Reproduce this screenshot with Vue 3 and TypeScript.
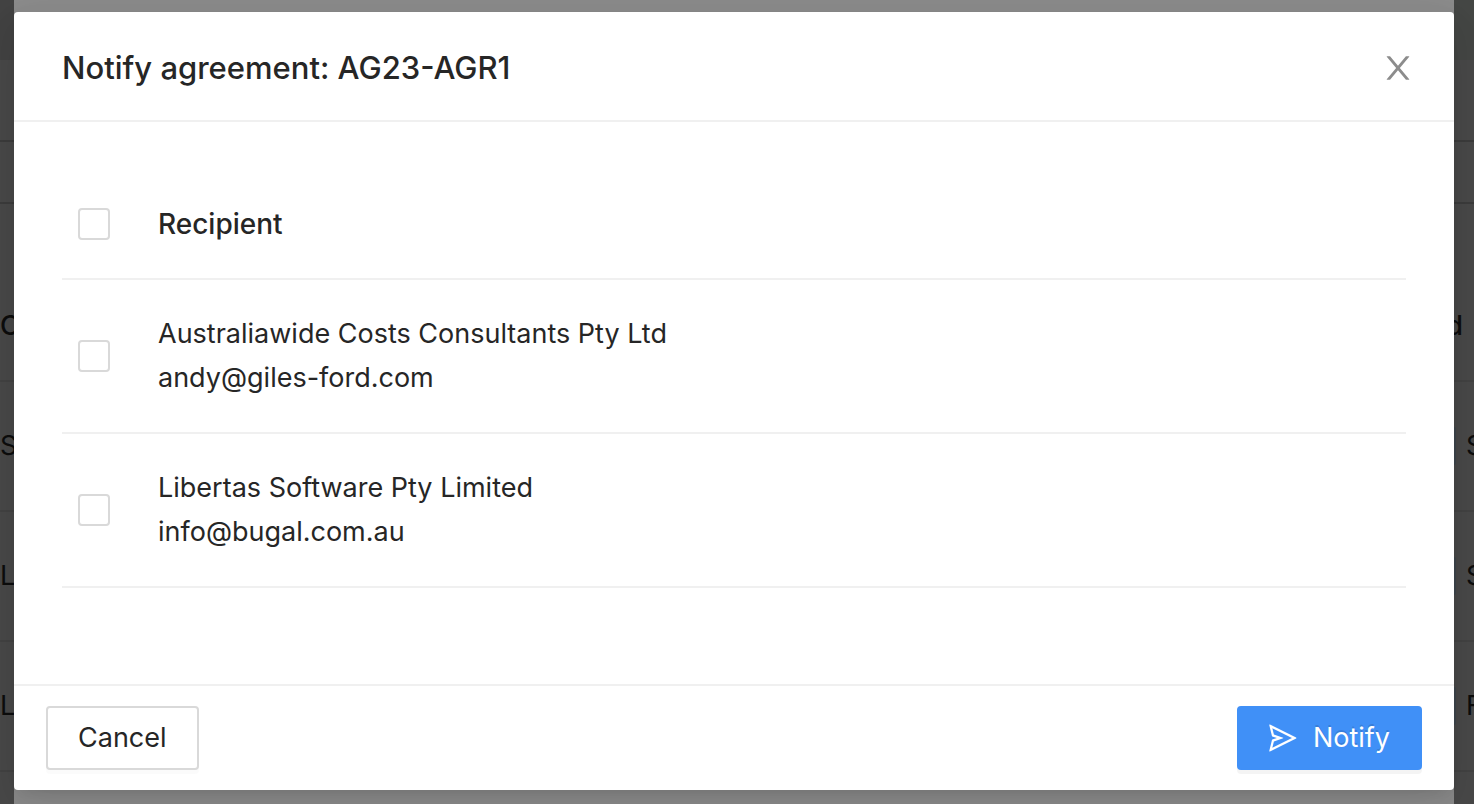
<script setup lang="ts">
import { computed, ref } from 'vue'

interface Recipient {
  id: number
  name: string
  email: string
}

interface BackdropRow {
  left: string
  right: string
}

const recipients: Recipient[] = [
  { id: 1, name: 'Australiawide Costs Consultants Pty Ltd', email: 'andy@giles-ford.com' },
  { id: 2, name: 'Libertas Software Pty Limited', email: 'info@bugal.com.au' },
]

const backdropRows: BackdropRow[] = [
  { left: 'S', right: 'S' },
  { left: 'L', right: 'S' },
  { left: 'L', right: 'F' },
]

const selected = ref<number[]>([])
const allSelected = computed<boolean>({
  get: () => selected.value.length === recipients.length,
  set: (value) => {
    selected.value = value ? recipients.map((r) => r.id) : []
  },
})
</script>

<template>
  <div class="screen">
    <div class="backdrop" aria-hidden="true">
      <div class="side">
        <div class="bar"></div>
        <div class="tabs"></div>
        <div class="tools"></div>
        <div class="space"></div>
        <div class="cell head">C</div>
        <div v-for="(row, i) in backdropRows" :key="i" class="cell">{{ row.left }}</div>
        <div class="rest"></div>
      </div>
      <div class="sheet"></div>
      <div class="side right">
        <div class="bar"></div>
        <div class="tabs"></div>
        <div class="tools"></div>
        <div class="space"></div>
        <div class="cell head">d</div>
        <div v-for="(row, i) in backdropRows" :key="i" class="cell">
          <span class="tag"></span>{{ row.right }}
        </div>
        <div class="rest"></div>
      </div>
    </div>

    <section class="modal" role="dialog" aria-modal="true" aria-labelledby="modal-title">
      <header class="header">
        <h1 id="modal-title">Notify agreement: AG23-AGR1</h1>
        <button class="close" type="button" aria-label="Close">
          <svg viewBox="64 64 896 896" width="32" height="32" fill="currentColor">
            <path d="M563.8 512l262.5-312.9c4.4-5.2.7-13.1-6.1-13.1h-79.8c-4.7 0-9.2 2.1-12.3 5.7L511.6 449.8 295.1 191.7c-3-3.6-7.5-5.7-12.3-5.7H203c-6.8 0-10.5 7.9-6.1 13.1L459.4 512 196.9 824.9A7.95 7.95 0 00203 838h79.8c4.7 0 9.2-2.1 12.3-5.7l216.5-258.1 216.5 258.1c3 3.6 7.5 5.7 12.3 5.7h79.8c6.8 0 10.5-7.9 6.1-13.1L563.8 512z" />
          </svg>
        </button>
      </header>

      <div class="body">
        <table>
          <thead>
            <tr>
              <th class="pick" scope="col">
                <input v-model="allSelected" type="checkbox" aria-label="Select all recipients" />
              </th>
              <th scope="col">Recipient</th>
            </tr>
          </thead>
          <tbody>
            <tr v-for="r in recipients" :key="r.id">
              <td class="pick">
                <input :id="`recipient-${r.id}`" v-model="selected" type="checkbox" :value="r.id" />
              </td>
              <td>
                <label :for="`recipient-${r.id}`">{{ r.name }}<br />{{ r.email }}</label>
              </td>
            </tr>
          </tbody>
        </table>
      </div>

      <footer class="footer">
        <button class="btn" type="button">Cancel</button>
        <button class="btn primary" type="button">
          <svg viewBox="64 64 896 896" width="28" height="28" fill="currentColor" aria-hidden="true">
            <path d="M931.4 498.9L94.9 79.5c-3.4-1.7-7.3-2.1-11-1.2a15.99 15.99 0 00-11.7 19.3l86.2 352.2c1.3 5.3 5.2 9.6 10.4 11.3l147.7 50.7-147.6 50.7c-5.2 1.8-9.1 6-10.3 11.3L72.2 926.5c-.9 3.7-.5 7.6 1.2 10.9 3.9 7.9 13.5 11.1 21.5 7.2l836.5-417c3.1-1.5 5.6-4.1 7.2-7.1 3.9-8 .7-17.6-7.2-21.6zM170.8 826.3l50.3-205.6 295.2-101.3c2.3-.8 4.2-2.6 5-5 1.4-4.2-.8-8.7-5-10.2L221.1 403 171 198.2l628 314.9-628.2 313.2z" />
          </svg>
          <span>Notify</span>
        </button>
      </footer>
    </section>
  </div>
</template>

<style>
body {
  margin: 0;
  background: #464646;
}
</style>

<style scoped>
.screen {
  position: relative;
  min-height: 100vh;
  box-sizing: border-box;
  padding: 12px 20px 14px 14px;
  overflow: hidden;
  font-family: Inter, 'Liberation Sans', sans-serif;
  font-size: 27px;
  line-height: 44px;
  color: #262626;
}

.backdrop {
  position: absolute;
  inset: 0;
  display: flex;
  background: #494949;
  color: #0d0d0d;
}

.side {
  display: flex;
  flex-direction: column;
  width: 14px;
  overflow: hidden;
}

.side.right {
  width: 20px;
}

.sheet {
  flex: 1;
  background: #8c8c8c;
}

.side > div {
  box-sizing: border-box;
  flex-shrink: 0;
}

.bar {
  height: 60px;
  background: #434343;
}

.right .bar {
  background: #454745;
}

.tabs {
  height: 82px;
  border-bottom: 2px solid #3c3c3c;
}

.tools {
  height: 62px;
  border-bottom: 2px solid #3c3c3c;
}

.space {
  height: 68px;
}

.cell {
  display: flex;
  align-items: center;
  height: 130px;
  border-bottom: 2px solid #434343;
}

.cell.head {
  height: 110px;
  font-weight: 500;
}

.right .cell {
  gap: 10px;
}

.right .head {
  justify-content: flex-end;
  padding-right: 11px;
}

.tag {
  flex-shrink: 0;
  width: 2px;
  height: 38px;
  border-radius: 0 2px 2px 0;
  background: #3f464c;
}

.modal {
  position: relative;
  background: #fff;
  border-radius: 4px;
  box-shadow: 0 6px 12px -8px rgba(0, 0, 0, 0.12), 0 12px 32px rgba(0, 0, 0, 0.08),
    0 18px 56px 16px rgba(0, 0, 0, 0.05);
}

.header {
  display: flex;
  align-items: center;
  justify-content: space-between;
  padding: 34px 40px 30px 48px;
  border-bottom: 2px solid #f0f0f0;
}

h1 {
  margin: 0;
  font-size: 31px;
  font-weight: 500;
  line-height: 44px;
}

.close {
  display: flex;
  padding: 0;
  border: 0;
  background: none;
  color: #8c8c8c;
  cursor: pointer;
}

.body {
  padding: 48px 48px 96px;
}

table {
  width: 100%;
  border-collapse: separate;
  border-spacing: 0;
  table-layout: fixed;
}

th,
td {
  padding: 32px 16px;
  border-bottom: 2px solid #f0f0f0;
  text-align: left;
  vertical-align: middle;
  font-weight: 400;
}

th {
  font-size: 28px;
  font-weight: 500;
}

label {
  display: block;
}

.pick {
  width: 48px;
}

input {
  appearance: none;
  display: block;
  box-sizing: border-box;
  width: 32px;
  height: 32px;
  margin: 0;
  border: 2px solid #d9d9d9;
  border-radius: 4px;
  background: #fff;
}

input:checked {
  border-color: #4090f7;
  background: #4090f7;
}

.footer {
  display: flex;
  justify-content: space-between;
  padding: 20px 32px;
  border-top: 2px solid #f0f0f0;
}

.btn {
  display: flex;
  align-items: center;
  gap: 16px;
  box-sizing: border-box;
  height: 64px;
  padding: 0 30px;
  border: 2px solid #d9d9d9;
  border-radius: 4px;
  background: #fff;
  box-shadow: 0 4px 0 rgba(0, 0, 0, 0.016);
  color: inherit;
  font: inherit;
  cursor: pointer;
}

.primary {
  border-color: #4090f7;
  background: #4090f7;
  box-shadow: 0 4px 0 rgba(0, 0, 0, 0.044);
  color: #fff;
  text-shadow: 0 -2px 0 rgba(0, 0, 0, 0.12);
}
</style>
